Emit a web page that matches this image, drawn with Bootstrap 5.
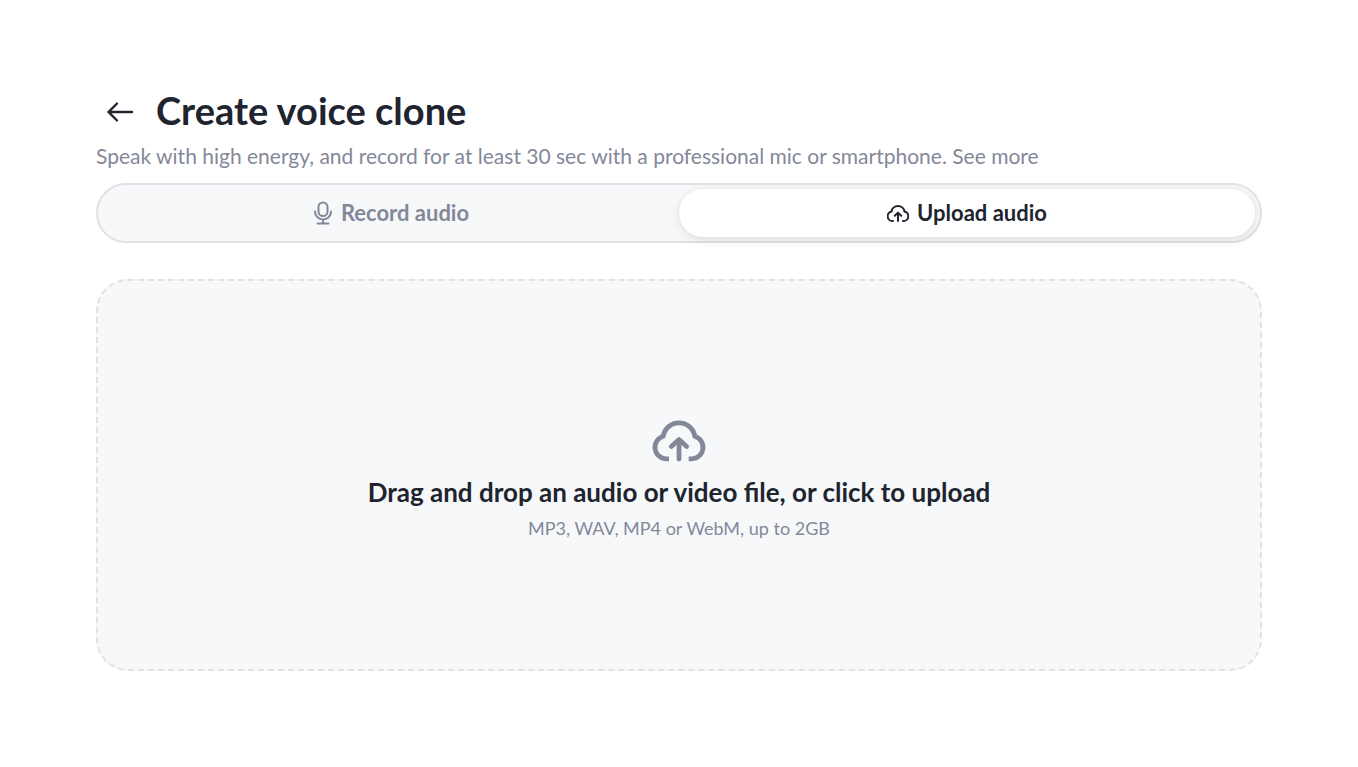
<!DOCTYPE html>
<html lang="en">
<head>
<meta charset="utf-8">
<meta name="viewport" content="width=device-width, initial-scale=1">
<title>Create voice clone</title>
<link href="https://cdn.jsdelivr.net/npm/bootstrap@5.3.0/dist/css/bootstrap.min.css" rel="stylesheet">
<style>
:root { --ink: #20242f; --muted: #838899; --panel: #f7f8fa; --line: #e1e2e5; }
body { font-family: Lato, "Liberation Sans", sans-serif; color: var(--ink); background: #fff; }
.page { padding: 88px 96px 96px; }
.title-row { gap: 12px; }
.back-btn { width: 48px; height: 48px; color: var(--ink); }
.page-title { font-size: 38px; line-height: 44px; padding-bottom: 4px; font-weight: 700; }
.hint { font-size: 21px; line-height: 32px; color: var(--muted); }
.switcher { height: 60px; margin-top: 11px; padding: 4px 5px; background: var(--panel); border: 2px solid var(--line); }
.switch-btn { flex: 1 1 0; border: 0; background: transparent; color: var(--muted); font-size: 22px; line-height: 28px; font-weight: 700; }
.switch-btn.active { background: #fff; color: var(--ink); box-shadow: 0 4px 12px rgba(0, 0, 0, .08), 0 0 5px rgba(0, 0, 0, .06); }
.dropzone { margin-top: 36px; padding-top: 8px; border-radius: 32px; background: var(--panel); border: 2px dashed var(--line); cursor: pointer; }
.drop-icon { color: var(--muted); margin-bottom: 14px; }
.drop-title { font-size: 26px; line-height: 32px; font-weight: 700; }
.drop-note { font-size: 18px; line-height: 24px; color: var(--muted); }
</style>
</head>
<body>
<main class="page min-vh-100 d-flex flex-column">
  <header>
    <div class="title-row d-flex align-items-center mb-1">
      <button type="button" class="back-btn btn p-0 border-0 d-flex align-items-center justify-content-center" aria-label="Back">
        <svg width="28" height="24" viewBox="0 0 28 24" fill="none" stroke="currentColor" stroke-width="2.4" stroke-linecap="round" stroke-linejoin="round"><path d="M26 12H2.500M11 3.500 2.500 12l8.500 8.500"/></svg>
      </button>
      <h1 class="page-title mb-0">Create voice clone</h1>
    </div>
    <p class="hint mb-0">Speak with high energy, and record for at least 30 sec with a professional mic or smartphone. <a href="#" class="text-reset text-decoration-none">See more</a></p>
  </header>

  <div class="switcher d-flex rounded-pill" role="tablist">
    <button type="button" class="switch-btn rounded-pill d-flex align-items-center justify-content-center gap-2" role="tab" aria-selected="false">
      <svg width="20" height="24" viewBox="0 0 20 24" fill="none" stroke="currentColor" stroke-width="2" stroke-linecap="round"><rect x="5.500" y="1.500" width="9" height="13.500" rx="4.500"/><path d="M2 10.500v.5a8 7.500 0 0 0 16 0v-.5M10 18.500v3.500M4.500 22.500h11"/></svg>
      <span>Record audio</span>
    </button>
    <button type="button" class="switch-btn active rounded-pill d-flex align-items-center justify-content-center gap-2" role="tab" aria-selected="true">
      <svg width="22" height="18" viewBox="0 0 22 18" fill="none" stroke="currentColor" stroke-width="2" stroke-linecap="round" stroke-linejoin="round"><path d="M6 17H5.600A4.800 4.800 0 0 1 4.500 7.500 6.600 6.600 0 0 1 17.500 7.500 4.800 4.800 0 0 1 16.400 17H16M11 17V9M7.800 11.800 11 8.600l3.200 3.200"/></svg>
      <span>Upload audio</span>
    </button>
  </div>

  <input type="file" id="audio-file" class="visually-hidden" accept=".mp3,.wav,.mp4,.webm">
  <label for="audio-file" class="dropzone flex-grow-1 d-flex flex-column align-items-center justify-content-center text-center">
    <svg class="drop-icon" width="54" height="44" viewBox="0 0 54 44" fill="none" stroke="currentColor" stroke-width="4.800" stroke-linejoin="round" stroke-linecap="round"><path stroke-linecap="butt" d="M17 40.800H14A11.500 11.500 0 0 1 11.200 18.300A16 16 0 0 1 42.800 18.300A11.500 11.500 0 0 1 40 40.800H36.700"/><path d="M27 41V23M19.300 28.500l7.700-7 7.700 7"/></svg>
    <span class="drop-title">Drag and drop an audio or video file, or click to upload</span>
    <span class="drop-note mt-2">MP3, WAV, MP4 or WebM, up to 2GB</span>
  </label>
</main>
<script src="https://cdn.jsdelivr.net/npm/bootstrap@5.3.0/dist/js/bootstrap.bundle.min.js"></script>
</body>
</html>
